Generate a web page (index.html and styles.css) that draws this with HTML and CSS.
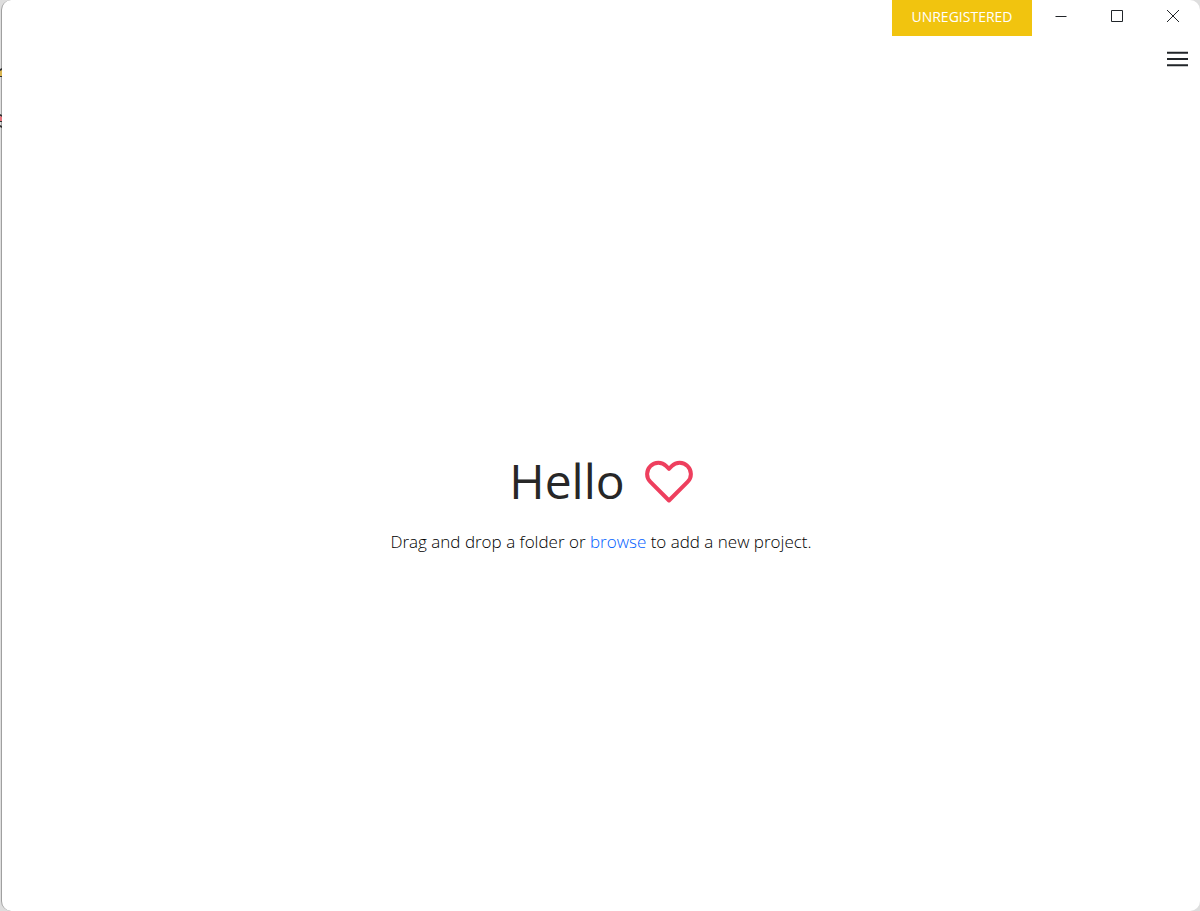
FILE: index.html
```html
<!DOCTYPE html>
<html lang="en">
<head>
<meta charset="utf-8">
<title>Projects</title>
<link rel="stylesheet" href="styles.css">
</head>
<body>
<svg class="backdrop" width="2" height="140" viewBox="0 0 2 140" aria-hidden="true">
  <path fill="#d9b550" d="M0 70h2v6H0z"/>
  <path fill="#333" d="M0 69l2-1v2l-2 1zM0 76h2v1H0zM0 114l2 1v2l-2-1zM0 121h2v1H0zM0 125l2 1v2l-2-1z"/>
  <path fill="#e8747c" d="M0 116l2 1v4H0z"/>
</svg>
<div class="window">
  <header class="titlebar">
    <button class="badge" type="button">UNREGISTERED</button>
    <button class="control" type="button" aria-label="Minimize">
      <svg width="14" height="14" viewBox="0 0 14 14"><path d="M1.500 7.500h11"/></svg>
    </button>
    <button class="control" type="button" aria-label="Maximize">
      <svg width="14" height="14" viewBox="0 0 14 14"><path d="M1.500 1.500h11v11h-11z"/></svg>
    </button>
    <button class="control" type="button" aria-label="Close">
      <svg width="14" height="14" viewBox="0 0 14 14"><path d="M1 1l12 12M13 1L1 13"/></svg>
    </button>
  </header>
  <nav class="toolbar">
    <button class="menu" type="button" aria-label="Menu">
      <svg width="21" height="16" viewBox="0 0 21 16"><path d="M0 1.700h21M0 8h21M0 14.300h21"/></svg>
    </button>
  </nav>
  <main class="welcome">
    <h1 class="greeting">Hello
      <svg class="heart" width="48" height="44" viewBox="0 0 48 44" aria-hidden="true"><path d="M24 40.500 5.400 21.900C1 17.500 1 10.500 5.400 6.100c4.400-4.400 11.500-4.400 15.900 0L24 8.800l2.700-2.700c4.400-4.400 11.500-4.400 15.900 0 4.400 4.400 4.400 11.400 0 15.800z"/></svg>
    </h1>
    <p class="hint">Drag and drop a folder or <a href="#">browse</a> to add a new project.</p>
  </main>
</div>
</body>
</html>
```
FILE: styles.css
```css
* {
  box-sizing: border-box;
}

body {
  margin: 0;
  padding-left: 1px;
  background: #dedede;
  color: #212529;
  font-family: "Segoe UI", "Open Sans", "Noto Sans", sans-serif;
}

.backdrop {
  position: absolute;
  top: 0;
  left: 0;
  z-index: 1;
}

.window {
  display: flex;
  flex-direction: column;
  min-height: 100vh;
  border-left: 1px solid #a0a0a0;
  border-radius: 10px;
  background: #fff;
}

.titlebar {
  display: flex;
  justify-content: flex-end;
}

button {
  padding: 0;
  border: 0;
  background: none;
  color: inherit;
  font: inherit;
}

.badge {
  width: 140px;
  height: 36px;
  padding-bottom: 3px;
  background: #f1c40f;
  color: #fff;
  font-size: 14px;
}

.control {
  display: flex;
  align-items: center;
  justify-content: center;
  width: 56px;
  height: 32px;
  padding-left: 2px;
}

.control svg {
  fill: none;
  stroke: #212529;
  stroke-width: 1;
}

.toolbar {
  display: flex;
  justify-content: flex-end;
  padding: 15px 12px 0;
}

.menu svg {
  display: block;
  fill: none;
  stroke: #212529;
  stroke-width: 2;
}

.welcome {
  display: flex;
  flex: 1;
  flex-direction: column;
  align-items: center;
  justify-content: center;
  padding-top: 28px;
}

.greeting {
  display: flex;
  align-items: center;
  gap: 20px;
  margin: 0;
  color: #272727;
  font-size: 48px;
  font-weight: 400;
  line-height: 60px;
}

.heart {
  margin-top: 2px;
  fill: none;
  stroke: #ee3f5e;
  stroke-width: 4;
  stroke-linejoin: round;
}

.hint {
  margin: 18px 0 0;
  color: #000;
  font-size: 17px;
  font-weight: 300;
  line-height: 26px;
}

.hint a {
  color: #0060ff;
  text-decoration: none;
}
```
